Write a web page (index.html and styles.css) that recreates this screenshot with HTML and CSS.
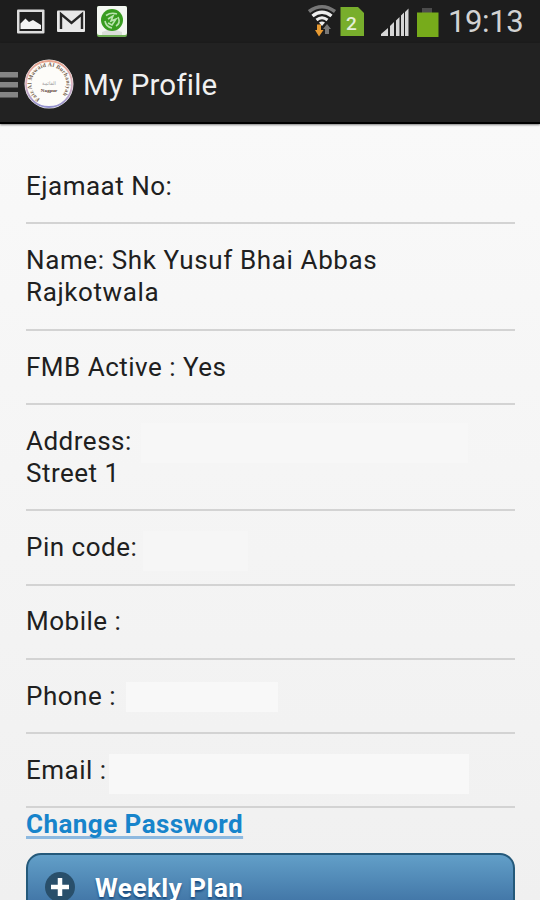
FILE: index.html
```
<!DOCTYPE html>
<html lang="en">
<head>
<meta charset="utf-8">
<title>My Profile</title>
<link rel="stylesheet" href="styles.css">
</head>
<body>
<div class="screen">
  <div class="status">
    <svg class="status-left" width="97" height="43" viewBox="0 0 97 43">
      <rect x="17" y="9.500" width="27.500" height="24" rx="1" fill="#ddd"/>
      <rect x="19.500" y="12" width="22.500" height="19" fill="#202020"/>
      <path d="M20.500 29V23.500L25.500 18.500L29 22L33 20L37 22.500L41 25V29Z" fill="#f2f2f2"/>
      <rect x="57" y="10.500" width="28" height="21.500" rx="1" fill="#e8e8e8"/>
      <path d="M61 29V14L71.500 23L82 14V29" fill="none" stroke="#262626" stroke-width="2.400"/>
    </svg>
    <svg class="status-app" width="30" height="31" viewBox="0 0 30 31">
      <rect width="30" height="31" rx="2" fill="#6fae55"/>
      <rect width="30" height="29" rx="2" fill="#f4f7f2"/>
      <path d="M5 26Q15 21 25 26V29H5Z" fill="#dcdfda"/>
      <circle cx="15" cy="14" r="11" fill="#389c20"/>
      <path d="M9 9.500Q14 6 20 8M8 15Q9 21 15 22M21 11Q24 17 19 20M11 13L16 10L14 15L19 13L15 19L11 17" fill="none" stroke="#b8e3ad" stroke-width="1.600"/>
    </svg>
    <svg class="status-right" width="132" height="43" viewBox="0 0 132 43">
      <g fill="none">
        <path d="M1 11.500Q14 2 27 11.500" stroke="#777" stroke-width="3.500"/>
        <path d="M4.500 16Q14 8.500 23.500 16" stroke="#eee" stroke-width="3.400"/>
        <path d="M8.500 20Q14 15.500 19.500 20" stroke="#eee" stroke-width="3"/>
      </g>
      <path d="M11 22.500Q14 20.500 17 22.500L14 26Z" fill="#eee"/>
      <path d="M9 24.500H13V30H15.500L11 36.500L7 30H9Z" fill="#e79a32"/>
      <path d="M17 34V29H15L19 24L23 29H21V34Z" fill="#777"/>
      <path d="M32.500 7H50L56 13V36H32.500Z" fill="#78ae2c"/>
      <text x="38" y="29.500" class="sim">2</text>
      <path d="M73 36V34L80 28V36ZM82 36V26L86 22V36ZM88 36V20.500L91.500 17V36ZM93 36V15.500L96 12.500V36ZM97 36V12L100.500 8.500V36Z" fill="#d6d6d6"/>
      <rect x="114" y="8" width="10" height="5" fill="#4c4c4c"/>
      <rect x="109" y="12.500" width="21.500" height="24.500" fill="#77ab1b"/>
    </svg>
    <span class="clock">19:13</span>
  </div>
  <header class="bar">
    <div class="menu"><i></i><i></i><i></i></div>
    <svg class="logo" width="50" height="50" viewBox="0 0 50 50">
      <defs>
        <linearGradient id="ring" x1="0" y1="0" x2="0" y2="1"><stop offset="0" stop-color="#e8a38c"/><stop offset=".5" stop-color="#ddb5c4"/><stop offset="1" stop-color="#9291cf"/></linearGradient>
        <path id="arc" d="M16 40A17.500 17.500 0 1 1 36 38.500"/>
      </defs>
      <circle cx="25" cy="25" r="24.500" fill="#eee"/>
      <circle cx="25" cy="25" r="23" fill="#fdfcf9" stroke="url(#ring)" stroke-width="1.800"/>
      <text class="seal"><textPath href="#arc" textLength="84">Faiz Al Mawaid Al Burhaniyah</textPath></text>
      <text class="seal-mid" x="25" y="26" text-anchor="middle">القائمة</text>
      <text class="seal-low" x="25" y="33" text-anchor="middle">Nagpur</text>
    </svg>
    <h1>My Profile</h1>
  </header>
  <main>
    <div class="row"><span>Ejamaat No:</span></div>
    <div class="row name"><span>Name: Shk Yusuf Bhai Abbas<br>Rajkotwala</span></div>
    <div class="row"><span>FMB Active : Yes</span></div>
    <div class="row address"><span>Address:<br>Street 1</span><b class="field"></b></div>
    <div class="row pin"><span>Pin code:</span><b class="field"></b></div>
    <div class="row"><span>Mobile :</span></div>
    <div class="row phone"><span>Phone :</span><b class="field"></b></div>
    <div class="row email"><span>Email :</span><b class="field"></b></div>
    <a class="change">Change Password</a>
    <div class="plan">
      <svg width="30" height="30" viewBox="0 0 30 30"><circle cx="15" cy="15" r="15" fill="#294f6b"/><path d="M15 6V24M6 15H24" stroke="#fff" stroke-width="4.500"/></svg>
      <span>Weekly Plan</span>
    </div>
  </main>
</div>
</body>
</html>
```
FILE: styles.css
```
* { box-sizing: border-box; }
body { margin: 0; font-family: Roboto, "Liberation Sans", sans-serif; }
.screen {
  width: 540px; height: 900px; overflow: hidden;
  display: flex; flex-direction: column;
  background: linear-gradient(#f9f9f9 124px, #f0f0f0 900px);
}
.status {
  height: 43px; flex: none; display: flex;
  background: #1d1d1d; color: #d2d2d2;
}
.status svg { display: block; flex: none; }
.status-app { margin-top: 6px; }
.status-right { margin-left: 181px; }
.sim { font-size: 19px; font-weight: 500; fill: #e5efd8; }
.clock { font-size: 31px; line-height: 43px; margin-left: 8px; letter-spacing: -0.4px; }
.bar {
  height: 81px; flex: none; display: flex; align-items: center;
  background: #222; border-bottom: 2px solid #000;
  padding-bottom: 1px;
  box-shadow: 0 1px 2px rgba(0, 0, 0, .5);
}
.menu { width: 18px; display: flex; flex-direction: column; gap: 4px; margin-top: 5px; }
.menu i { height: 6px; background: #858585; border-bottom: 1px solid #555; }
.logo { margin-left: 6px; margin-top: 3px; }
.seal { font: 700 5.8px "Liberation Serif", serif; fill: #75604c; }
.seal-mid { font: 5px "DejaVu Sans", sans-serif; fill: #999; }
.seal-low { font: 700 5px "Liberation Serif", serif; fill: #5b4036; }
h1 { margin: 5px 0 0 9px; font-size: 29.5px; line-height: 36px; font-weight: 400; letter-spacing: 0.2px; color: #f0f0f0; }
main { padding: 26px 25px 0 26px; display: flex; flex-direction: column; }
.row {
  display: flex; flex: none; align-items: flex-start;
  padding: 19.8px 0 20px; border-bottom: 2px solid #d3d3d3;
  font-size: 26px; line-height: 32.37px; letter-spacing: 0.5px; color: #202020;
}
.name { letter-spacing: 0.62px; }
.row span { white-space: nowrap; flex: none; }
.field { flex: none; background: #f8f8f8; height: 40px; margin: 0 0 -7.63px; }
.address .field { width: 327px; margin: -2px 0 0 9px; background: #f7f7f7; }
.pin .field { width: 105px; margin-left: 6px; background: #f6f6f6; }
.phone .field { width: 152px; height: 30px; margin: 2px 0 0 10px; }
.email .field { width: 360px; margin-left: 2px; }
.change {
  align-self: flex-start; font-size: 26px; line-height: 32px; font-weight: 700;
  color: #1784cb; white-space: nowrap; letter-spacing: 0.45px;
  text-decoration: underline; text-decoration-color: #8db9e0;
  text-decoration-thickness: 3px; text-underline-offset: 3px; text-decoration-skip-ink: none;
}
.plan {
  flex: none; height: 70px; margin-top: 13px;
  display: flex; align-items: flex-start; padding: 17px;
  border: 2px solid #24597a; border-radius: 15px 15px 0 0;
  background: linear-gradient(#629fc8, #396b9e 60px);
  color: #fff; font-size: 26px; line-height: 33px; font-weight: 700;
  letter-spacing: 0.5px; text-shadow: 0 2px 2px #194b7e;
}
.plan span { margin-left: 20px; }
```
